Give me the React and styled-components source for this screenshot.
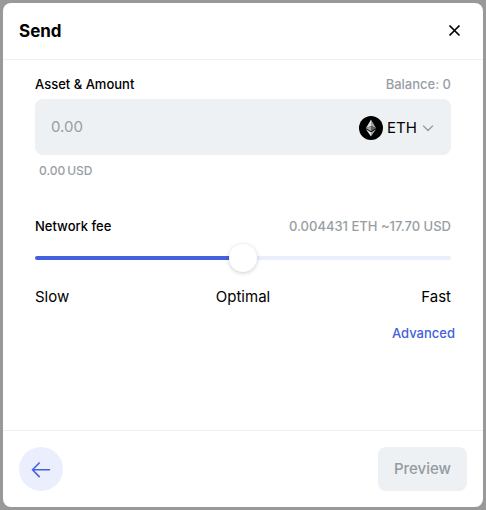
import React, { useState } from "react";
import styled, { createGlobalStyle } from "styled-components";

const GlobalStyle = createGlobalStyle`
  *, *::before, *::after { box-sizing: border-box; }
  body { margin: 0; background: #999999; }
  body, button, input, select { font-family: Inter, "Liberation Sans", sans-serif; }
`;

const Backdrop = styled.main`
  display: flex;
  min-height: 100vh;
  padding: 3px;
  background: #999999;
`;

const Dialog = styled.form`
  flex: 1;
  min-width: 0;
  display: flex;
  flex-direction: column;
  background: #ffffff;
  border-radius: 8px;
  color: #000000;
`;

const Header = styled.header`
  display: flex;
  align-items: center;
  justify-content: space-between;
  padding: 16px;
  border-bottom: 1px solid #eef0f2;
`;

const Title = styled.h1`
  margin: 0;
  font-size: 17px;
  line-height: 24px;
  font-weight: 700;
`;

const IconButton = styled.button`
  display: flex;
  padding: 5px 6px;
  border: 0;
  background: none;
  color: #000000;
  cursor: pointer;
`;

const Body = styled.section`
  flex: 1;
  display: flex;
  flex-direction: column;
  padding: 16px 32px;
`;

const FieldHead = styled.div`
  display: flex;
  align-items: center;
  justify-content: space-between;
  font-size: 13px;
  line-height: 16px;
`;

const Label = styled.label`
  font-weight: 500;
`;

const Hint = styled.span`
  color: #979ea3;
  font-size: ${(p) => (p.$small ? 12 : 13)}px;
  font-weight: 500;
  line-height: 16px;
`;

const AmountField = styled.div`
  display: flex;
  align-items: center;
  height: 56px;
  margin-top: 7px;
  padding: 0 16px;
  border-radius: 8px;
  background: #edf1f4;
`;

const AmountInput = styled.input`
  flex: 1;
  min-width: 0;
  padding: 0;
  border: 0;
  outline: 0;
  background: none;
  font-size: 15px;
  line-height: 24px;
  &::placeholder { color: #979ea3; opacity: 1; }
`;

const AssetPicker = styled.div`
  display: flex;
  align-items: center;
  gap: 4px;
  padding-top: 2px;
`;

const AssetSelect = styled.select`
  appearance: none;
  padding: 0;
  border: 0;
  background: none;
  color: #000000;
  font-size: 15px;
  line-height: 24px;
`;

const Converted = styled.div`
  display: flex;
  gap: 2px;
  padding: 8px 4px;
`;

const FeeSection = styled.section`
  margin-top: 31px;
`;

const Slider = styled.input`
  display: block;
  appearance: none;
  width: 100%;
  height: 28px;
  margin: 10px 0 0;
  background: none;
  cursor: pointer;

  &::-webkit-slider-runnable-track {
    height: 4px;
    border-radius: 2px;
    background: linear-gradient(to right, #4361dd var(--fill), #ebeffd var(--fill));
  }
  &::-webkit-slider-thumb {
    appearance: none;
    width: 28px;
    height: 28px;
    margin-top: -12px;
    border-radius: 50%;
    background: #ffffff;
    box-shadow: 0 1px 4px rgba(0, 0, 0, 0.2);
  }
`;

const Speeds = styled.div`
  display: grid;
  grid-template-columns: 1fr auto 1fr;
  margin-top: 13px;
  font-size: 15px;
  line-height: 24px;
`;

const Speed = styled.span`
  text-align: ${(p) => p.$align};
`;

const AdvancedRow = styled.div`
  display: flex;
  justify-content: flex-end;
  margin: 16px -4px 0 0;
`;

const TextButton = styled.button`
  padding: 0;
  border: 0;
  background: none;
  color: #4361dd;
  font-size: 13px;
  line-height: 16px;
  font-weight: 500;
  cursor: pointer;
`;

const Footer = styled.footer`
  display: flex;
  align-items: center;
  justify-content: space-between;
  padding: 16px;
  border-top: 1px solid #eef0f2;
`;

const BackButton = styled.button`
  display: flex;
  align-items: center;
  justify-content: center;
  width: 44px;
  height: 44px;
  padding: 0;
  border: 0;
  border-radius: 50%;
  background: #ebeffd;
  color: #4361dd;
  cursor: pointer;
`;

const PreviewButton = styled.button`
  height: 44px;
  padding: 0 16px 1px;
  border: 0;
  border-radius: 8px;
  background: #edf1f4;
  color: #939ba1;
  font-size: 15px;
  font-weight: 500;
`;

const CloseIcon = () => (
  <svg width="13" height="14" viewBox="0 0 13 14" fill="none" stroke="currentColor" strokeWidth="1.7" aria-hidden="true">
    <path d="M1.5 1.5l10 10M11.5 1.5l-10 10" />
  </svg>
);

const EthIcon = () => (
  <svg width="24" height="24" viewBox="0 0 24 24" aria-hidden="true">
    <circle cx="12" cy="12" r="12" fill="#000000" />
    <path d="M12 3.5L6.9 12.3L12 10Z" fill="#dcdddd" />
    <path d="M12 3.5L17.1 12.3L12 10Z" fill="#a2a3a4" />
    <path d="M6.9 12.3L12 10V15.3Z" fill="#a0a1a2" />
    <path d="M17.1 12.3L12 10V15.3Z" fill="#5c5e60" />
    <path d="M6.9 13.3L12 16.3V20.5Z" fill="#e2e3e3" />
    <path d="M17.1 13.3L12 16.3V20.5Z" fill="#a0a2a4" />
  </svg>
);

const ChevronIcon = () => (
  <svg width="14" height="14" viewBox="0 0 14 14" fill="none" stroke="#939ba1" strokeWidth="1.3" strokeLinecap="round" strokeLinejoin="round" aria-hidden="true">
    <path d="M2.5 5L7 9.5L11.5 5" />
  </svg>
);

const ArrowIcon = () => (
  <svg width="20" height="20" viewBox="0 0 20 20" fill="none" stroke="currentColor" strokeWidth="1.6" strokeLinecap="round" strokeLinejoin="round" aria-hidden="true">
    <path d="M8.2 4L1.5 10.8L8.2 17.6M1.5 10.8H18.5" />
  </svg>
);

export default function App() {
  const [amount, setAmount] = useState("");
  const [fee, setFee] = useState(50);

  return (
    <>
      <GlobalStyle />
      <Backdrop>
        <Dialog role="dialog" aria-labelledby="send-title" onSubmit={(e) => e.preventDefault()}>
          <Header>
            <Title id="send-title">Send</Title>
            <IconButton type="button" aria-label="Close">
              <CloseIcon />
            </IconButton>
          </Header>
          <Body>
            <FieldHead>
              <Label htmlFor="amount">Asset &amp; Amount</Label>
              <Hint>Balance: 0</Hint>
            </FieldHead>
            <AmountField>
              <AmountInput
                id="amount"
                inputMode="decimal"
                placeholder="0.00"
                value={amount}
                onChange={(e) => setAmount(e.target.value)}
              />
              <AssetPicker>
                <EthIcon />
                <AssetSelect aria-label="Asset">
                  <option>ETH</option>
                </AssetSelect>
                <ChevronIcon />
              </AssetPicker>
            </AmountField>
            <Converted>
              <Hint $small>0.00</Hint>
              <Hint $small>USD</Hint>
            </Converted>
            <FeeSection>
              <FieldHead>
                <Label htmlFor="fee">Network fee</Label>
                <Hint>0.004431 ETH ~17.70 USD</Hint>
              </FieldHead>
              <Slider
                id="fee"
                type="range"
                min="0"
                max="100"
                value={fee}
                onChange={(e) => setFee(Number(e.target.value))}
                style={{ "--fill": `${fee}%` }}
              />
              <Speeds>
                <Speed $align="left">Slow</Speed>
                <Speed $align="center">Optimal</Speed>
                <Speed $align="right">Fast</Speed>
              </Speeds>
              <AdvancedRow>
                <TextButton type="button">Advanced</TextButton>
              </AdvancedRow>
            </FeeSection>
          </Body>
          <Footer>
            <BackButton type="button" aria-label="Back">
              <ArrowIcon />
            </BackButton>
            <PreviewButton type="submit" disabled>
              Preview
            </PreviewButton>
          </Footer>
        </Dialog>
      </Backdrop>
    </>
  );
}
